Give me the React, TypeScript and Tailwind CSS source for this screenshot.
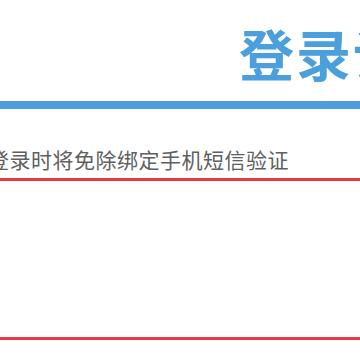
export default function App() {
  return (
    <div
      className="w-[360px] h-[360px] overflow-hidden bg-white flex flex-col"
      style={{ fontFamily: '"Noto Sans CJK SC", "Noto Sans", sans-serif' }}
    >
      <div className="h-[101px] flex items-center pl-[239px] whitespace-nowrap">
        <h1 className="text-[55px] leading-none font-bold text-[#4a9fdc] tracking-[2px] mt-[4px]">登录设置</h1>
      </div>
      <div className="h-[8px] bg-[#4a9fdc]" />
      <div className="h-[69px] flex items-center whitespace-nowrap">
        <p className="ml-[-12px] text-[21px] leading-none text-[#606060] tracking-[0.5px] mt-[32px]">登录时将免除绑定手机短信验证</p>
      </div>
      <div className="h-[3px] bg-[#e53a44]" />
      <div className="h-[156px]" />
      <div className="h-[3px] bg-[#e53a44]" />
    </div>
  )
}
